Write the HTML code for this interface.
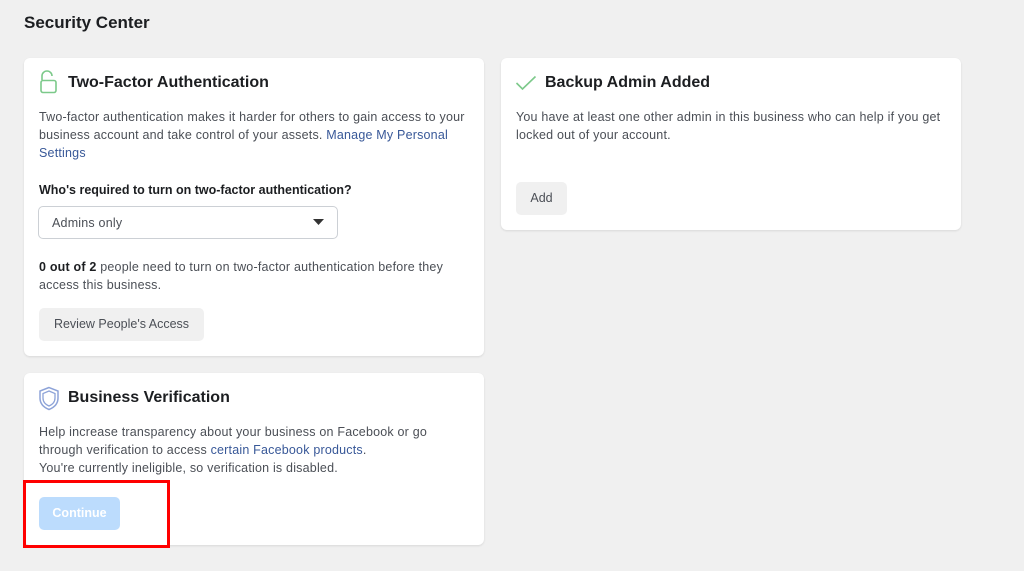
<!DOCTYPE html>
<html><head><style>
body{margin:0;width:1024px;height:571px;background:#f0f0f0;font-family:"Liberation Sans",Arial,sans-serif;color:#444;position:relative;overflow:hidden}
.h{position:absolute;left:24px;top:13px;font-size:17px;font-weight:bold;color:#1c1e21}
.card{position:absolute;background:#fff;border-radius:6px;box-shadow:0 1px 2px rgba(0,0,0,.1)}
.t{position:absolute;left:44px;font-size:16px;font-weight:bold;color:#1c1e21}
.p{position:absolute;left:15px;font-size:12.5px;line-height:18px;color:#4b4f56;letter-spacing:0.2px}
a{color:#385898;text-decoration:none}
.btn{position:absolute;background:#f0f0f0;border-radius:5px;font-size:12.5px;color:#4b4f56;text-align:center}
svg{position:absolute}
</style></head><body>
<div class="h">Security Center</div>
<div class="card" style="left:24px;top:58px;width:460px;height:298px">
<svg style="left:15px;top:12px" width="20" height="24" viewBox="0 0 20 24"><path d="M3 10V6a5 5 0 0 1 10 0" fill="none" stroke="#7cc98a" stroke-width="1.6"/><rect x="2" y="10.5" width="15" height="12" rx="2" fill="none" stroke="#7cc98a" stroke-width="1.6"/></svg>
<div class="t" style="top:16px">Two-Factor Authentication</div>
<div class="p" style="top:50px;width:432px">Two-factor authentication makes it harder for others to gain access to your business account and take control of your assets. <a>Manage My Personal Settings</a></div>
<div class="p" style="top:123px;font-weight:bold;color:#1c1e21;letter-spacing:0">Who's required to turn on two-factor authentication?</div>
<div style="position:absolute;left:14px;top:148px;width:298px;height:31px;border:1px solid #ccd0d5;border-radius:5px"></div>
<div class="p" style="top:156px;left:28px">Admins only</div>
<svg style="left:289px;top:161px" width="12" height="7"><path d="M0 0h11L5.5 6z" fill="#333"/></svg>
<div class="p" style="top:200px;width:410px"><b style="color:#1c1e21">0 out of 2</b> people need to turn on two-factor authentication before they access this business.</div>
<div class="btn" style="left:15px;top:250px;width:165px;height:33px;line-height:33px">Review People's Access</div>
</div>
<div class="card" style="left:24px;top:373px;width:460px;height:172px">
<svg style="left:14px;top:13px" width="22" height="25" viewBox="0 0 22 25"><path d="M11 1.5L2 5v7c0 6 4 9.5 9 11.5 5-2 9-5.5 9-11.5V5z" fill="none" stroke="#8da3d8" stroke-width="1.5"/><path d="M11 5L5 7.5v4.5c0 4 2.5 6.5 6 8 3.5-1.5 6-4 6-8V7.5z" fill="none" stroke="#8da3d8" stroke-width="1.3"/></svg>
<div class="t" style="top:16px">Business Verification</div>
<div class="p" style="top:50px;width:440px">Help increase transparency about your business on Facebook or go<br>through verification to access <a>certain Facebook products</a>.<br>You're currently ineligible, so verification is disabled.</div>
<div class="btn" style="left:15px;top:124px;width:81px;height:33px;line-height:33px;background:#bcdcfd;color:#fff;font-weight:bold">Continue</div>
</div>
<div style="position:absolute;left:23px;top:480px;width:141px;height:62px;border:3px solid #f00"></div>
<div class="card" style="left:501px;top:58px;width:460px;height:172px">
<svg style="left:14px;top:17px" width="22" height="16"><path d="M1.5 8l6 6L20.5 1.5" fill="none" stroke="#7cc98a" stroke-width="1.6"/></svg>
<div class="t" style="top:16px">Backup Admin Added</div>
<div class="p" style="top:50px;width:430px">You have at least one other admin in this business who can help if you get locked out of your account.</div>
<div class="btn" style="left:15px;top:124px;width:51px;height:33px;line-height:33px">Add</div>
</div>
</body></html>
